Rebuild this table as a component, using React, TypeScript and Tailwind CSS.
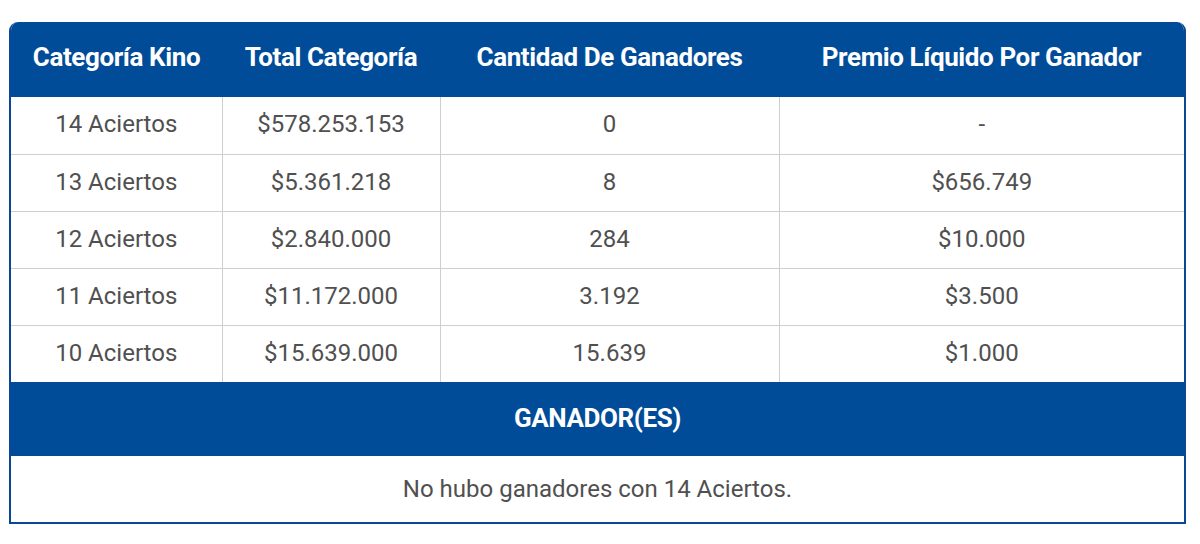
import React from "react";

const rows = [
  ["14 Aciertos", "$578.253.153", "0", "-"],
  ["13 Aciertos", "$5.361.218", "8", "$656.749"],
  ["12 Aciertos", "$2.840.000", "284", "$10.000"],
  ["11 Aciertos", "$11.172.000", "3.192", "$3.500"],
  ["10 Aciertos", "$15.639.000", "15.639", "$1.000"],
];

export default function App() {
  return (
    <div className="w-[1200px] h-[544px] bg-white pt-[22px] pl-[9px]" style={{ fontFamily: "Roboto, 'Liberation Sans', sans-serif" }}>
      <div className="w-[1177px] rounded-t-[9px] overflow-hidden border-x-2 border-b-2 border-[#0b4797] bg-white">
        <table className="w-full border-collapse table-fixed">
          <colgroup>
            <col className="w-[211px]" />
            <col className="w-[218px]" />
            <col className="w-[339px]" />
            <col />
          </colgroup>
          <thead>
            <tr className="bg-[#004c99] h-[75px]">
              {["Categoría Kino", "Total Categoría", "Cantidad De Ganadores", "Premio Líquido Por Ganador"].map((h) => (
                <th key={h} className="text-white font-bold text-[26px] tracking-[-0.4px] text-center align-middle pt-0 pb-[4px] px-0">{h}</th>
              ))}
            </tr>
          </thead>
          <tbody>
            {rows.map((r, i) => (
              <tr key={i} className="h-[57px]">
                {r.map((c, j) => (
                  <td
                    key={j}
                    className={`text-[24px] text-[#505050] text-center align-middle pt-0 pb-[2px] px-0 ${i > 0 ? "border-t border-[#cfcfcf]" : ""} ${j > 0 ? "border-l border-[#cfcfcf]" : ""}`}
                  >
                    {c}
                  </td>
                ))}
              </tr>
            ))}
            <tr className="bg-[#004c99] h-[74px]">
              <td colSpan={4} className="text-white font-bold text-[26px] tracking-[-0.4px] text-center align-middle pt-0 pb-[2px] px-0">GANADOR(ES)</td>
            </tr>
            <tr className="h-[66px]">
              <td colSpan={4} className="text-[24px] text-[#505050] text-center align-middle p-0">No hubo ganadores con 14 Aciertos.</td>
            </tr>
          </tbody>
        </table>
      </div>
    </div>
  );
}
